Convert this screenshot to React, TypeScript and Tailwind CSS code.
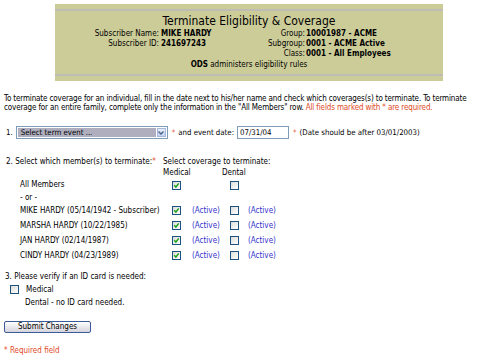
import React from "react";

const CB = ({ checked }: { checked?: boolean }) => (
  <span className="relative inline-block w-[9px] h-[9px] shrink-0 border border-[#1c5180] bg-linear-to-br from-[#dcdcd7] to-white">
    {checked && (
      <svg className="absolute left-0 top-0" width="7" height="7" viewBox="0 0 7 7">
        <path d="M1.2 3.2 L2.9 5 L5.8 1.4" fill="none" stroke="#21a121" strokeWidth="1.5" />
      </svg>
    )}
  </span>
);

const Star = () => <span className="text-[#e04a1f]">*</span>;

const members = [
  "MIKE HARDY (05/14/1942 - Subscriber)",
  "MARSHA HARDY (10/22/1985)",
  "JAN HARDY (02/14/1987)",
  "CINDY HARDY (04/23/1989)",
];

export default function App() {
  return (
    <div className="w-[500px] h-[357px] bg-white text-black text-[8px] leading-[10px] font-['DejaVu_Sans_Condensed','DejaVu_Sans',sans-serif] overflow-hidden">
      {/* Header box */}
      <div className="ml-[55px] mt-[4px] w-[388px] h-[77px] bg-[#cccc99] pt-[5px] flex flex-col">
        <div className="h-[2px] bg-[#bdbdb5]" />
        <div className="text-center text-[12px] leading-[13px] mt-[4px]">Terminate Eligibility &amp; Coverage</div>
        <div className="grid grid-cols-[104px_62px_84px_1fr] mt-[1px]">
          <div className="text-right">Subscriber Name:</div>
          <div className="pl-[2px] font-bold whitespace-nowrap">MIKE HARDY</div>
          <div className="text-right">Group:</div>
          <div className="pl-[1px] font-bold whitespace-nowrap">10001987 - ACME</div>

          <div className="text-right">Subscriber ID:</div>
          <div className="pl-[2px] font-bold">241697243</div>
          <div className="text-right">Subgroup:</div>
          <div className="pl-[1px] font-bold whitespace-nowrap">0001 - ACME Active</div>

          <div />
          <div />
          <div className="text-right">Class:</div>
          <div className="pl-[1px] font-bold whitespace-nowrap">0001 - All Employees</div>
        </div>
        <div className="text-center mt-[1px]">
          <span className="font-bold">ODS</span> administers eligibility rules
        </div>
        <div className="mt-auto mb-[5px] h-[2px] bg-[#bdbdb5]" />
      </div>

      {/* Intro paragraph */}
      <div className="mt-[13px] px-[4px] text-[8px] tracking-[-0.14px] leading-[9px] whitespace-nowrap">
        To terminate coverage for an individual, fill in the date next to his/her name and check which coverages(s) to terminate. To terminate
        <br />
        coverage for an entire family, complete only the information in the "All Members" row.{" "}
        <span className="text-[#e04a1f]">All fields marked with * are required.</span>
      </div>

      {/* Step 1 */}
      <div className="mt-[14px] flex items-center h-[13px] pl-[6px] text-[7.8px] whitespace-nowrap">
        <span>1.</span>
        <div className="ml-[3px] w-[152px] h-[13px] shrink-0 border border-[#7f9db9] bg-white flex items-stretch p-[1px]">
          <div className="flex-1 bg-[#aeaebe] pl-[3px] flex items-center">Select term event ...</div>
          <div className="w-[9px] ml-[1px] border border-[#a5b6d6] bg-linear-to-b from-[#e8eefb] to-[#c2d1f0] flex items-center justify-center">
            <svg width="6" height="4" viewBox="0 0 6 4">
              <path d="M0.5 0.5 L3 3 L5.5 0.5" fill="none" stroke="#4d6185" strokeWidth="1.3" />
            </svg>
          </div>
        </div>
        <span className="ml-[4px]"><Star /></span>
        <span className="ml-[3px]">and event date:</span>
        <div className="ml-[3px] w-[52px] h-[13px] shrink-0 border border-[#7f9db9] bg-white pl-[2px] flex items-center">07/31/04</div>
        <span className="ml-[4px]"><Star /></span>
        <span className="ml-[3px]">(Date should be after 03/01/2003)</span>
      </div>

      {/* Step 2 */}
      <div className="mt-[18px] flex h-[10px] items-center whitespace-nowrap">
        <div className="w-[163px] shrink-0 pl-[6px]">
          2. Select which member(s) to terminate:<Star />
        </div>
        <div>Select coverage to terminate:</div>
      </div>
      <div className="flex h-[10px] items-center mt-[1px]">
        <div className="w-[163px] shrink-0" />
        <div className="w-[59px] shrink-0">Medical</div>
        <div>Dental</div>
      </div>
      <div className="flex h-[14px] items-center">
        <div className="w-[163px] shrink-0 pl-[20px]">All Members</div>
        <div className="w-[59px] shrink-0 flex items-center"><span className="ml-[9px] flex"><CB checked /></span></div>
        <div className="flex items-center"><span className="ml-[8px] flex"><CB /></span></div>
      </div>
      <div className="flex h-[11px] items-center pl-[20px]">- or -</div>
      {members.map((m) => (
        <div key={m} className="flex h-[15px] items-center">
          <div className="w-[163px] shrink-0 pl-[20px] whitespace-nowrap overflow-visible">{m}</div>
          <div className="w-[59px] shrink-0 flex items-center">
            <span className="ml-[9px] flex"><CB checked /></span>
            <span className="ml-[11px] text-[#3333cc]">(Active)</span>
          </div>
          <div className="flex items-center">
            <span className="ml-[8px] flex"><CB /></span>
            <span className="ml-[9px] text-[#3333cc]">(Active)</span>
          </div>
        </div>
      ))}

      {/* Step 3 */}
      <div className="mt-[9px] h-[10px] flex items-center pl-[5px]">3. Please verify if an ID card is needed:</div>
      <div className="mt-[2px] h-[11px] flex items-center pl-[10px]">
        <CB />
        <span className="ml-[7px]">Medical</span>
      </div>
      <div className="mt-[2px] h-[11px] flex items-center pl-[25px]">Dental - no ID card needed.</div>

      <div className="mt-[13px] pl-[4px]">
        <button className="w-[87px] h-[12px] rounded-[2px] border border-[#3c5a9a] bg-linear-to-b from-white to-[#d4d4dc] text-[8px] leading-[10px] flex items-center justify-center">
          Submit Changes
        </button>
      </div>

      <div className="mt-[13px] pl-[4px] h-[10px] flex items-center text-[#e04a1f]">* Required field</div>
    </div>
  );
}
